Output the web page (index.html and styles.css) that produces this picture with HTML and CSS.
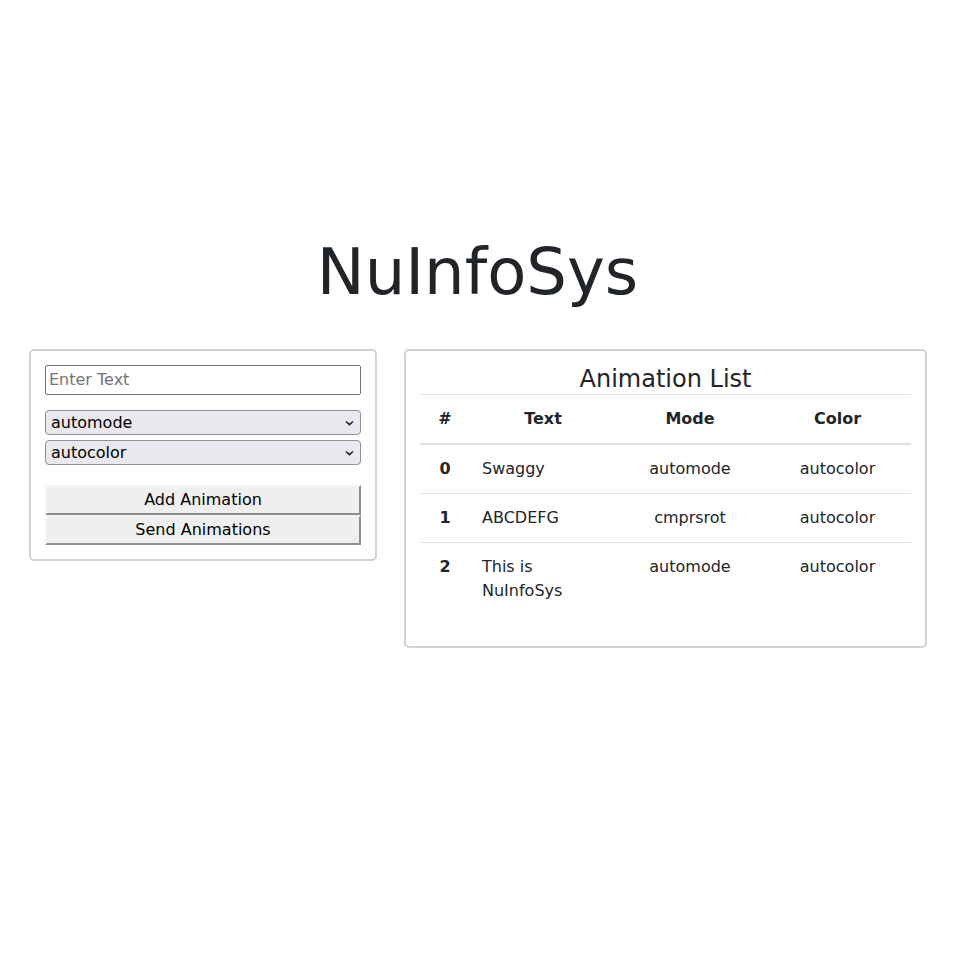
FILE: index.html
```html
<!DOCTYPE html>
<html lang="en">
<head>
    <meta charset="UTF-8">
    <meta name="viewport" content="width=device-width, initial-scale=1.0">
    <title>NuInfoSys</title>
    <link rel="stylesheet" href="styles.css">
</head>
<body>
    <h1 class="title">NuInfoSys</h1>
    <div class="panels">
        <div class="card form-card">
            <input type="text" class="text-input" placeholder="Enter Text">
            <div class="picker-wrap picker-first">
                <select class="picker">
                    <option>automode</option>
                    <option>cmprsrot</option>
                </select>
                <svg class="chevron" width="9" height="6" viewBox="0 0 9 6"><path d="M1 1.5l3.5 3.2 3.5-3.2" fill="none" stroke="#222" stroke-width="1.6"/></svg>
            </div>
            <div class="picker-wrap">
                <select class="picker">
                    <option>autocolor</option>
                </select>
                <svg class="chevron" width="9" height="6" viewBox="0 0 9 6"><path d="M1 1.5l3.5 3.2 3.5-3.2" fill="none" stroke="#222" stroke-width="1.6"/></svg>
            </div>
            <button class="action action-first">Add Animation</button>
            <button class="action">Send Animations</button>
        </div>
        <div class="card list-card">
            <h3 class="list-title">Animation List</h3>
            <table class="anim-table">
                <colgroup>
                    <col class="col-num">
                    <col class="col-text">
                    <col class="col-mode">
                    <col class="col-color">
                </colgroup>
                <thead>
                    <tr>
                        <th>#</th>
                        <th>Text</th>
                        <th>Mode</th>
                        <th>Color</th>
                    </tr>
                </thead>
                <tbody>
                    <tr>
                        <th>0</th>
                        <td class="cell-text">Swaggy</td>
                        <td>automode</td>
                        <td>autocolor</td>
                    </tr>
                    <tr>
                        <th>1</th>
                        <td class="cell-text">ABCDEFG</td>
                        <td>cmprsrot</td>
                        <td>autocolor</td>
                    </tr>
                    <tr>
                        <th>2</th>
                        <td class="cell-text">This is NuInfoSys</td>
                        <td>automode</td>
                        <td>autocolor</td>
                    </tr>
                </tbody>
            </table>
        </div>
    </div>
</body>
</html>
```

FILE: styles.css
```css
body {
    margin: 0;
    padding-top: 234px;
    font-family: "DejaVu Sans", sans-serif;
    font-size: 16px;
    line-height: 1.5;
    color: #212529;
    background: #fff;
}

.title {
    margin: 0 0 38px;
    padding-right: 5px;
    font-size: 64px;
    font-weight: 400;
    line-height: 1.2;
    text-align: center;
}

.panels {
    display: flex;
    align-items: flex-start;
    gap: 27px;
    padding-left: 29px;
}

.card {
    border: 2px solid #d3d3d3;
    border-radius: 5px;
    padding: 14px;
    box-sizing: border-box;
}

.form-card {
    width: 348px;
    display: flex;
    flex-direction: column;
}

.list-card {
    width: 523px;
}

.text-input {
    height: 30px;
    margin: 0 0 15px;
    padding: 1px 3px;
    box-sizing: border-box;
    font-family: inherit;
    font-size: 16px;
    border: 1px solid #767676;
    border-radius: 2px;
    color: #212529;
}

.text-input::placeholder {
    color: #757575;
}

.picker-wrap {
    position: relative;
    height: 25px;
}

.picker-first {
    margin-bottom: 5px;
}

.picker {
    appearance: none;
    width: 100%;
    height: 25px;
    margin: 0;
    padding: 0 20px 0 5px;
    box-sizing: border-box;
    font-family: inherit;
    font-size: 16px;
    line-height: 23px;
    color: #000;
    background: #e9e9ed;
    border: 1px solid #8f8f9d;
    border-radius: 4px;
}

.chevron {
    position: absolute;
    right: 7px;
    top: 10px;
    pointer-events: none;
}

.action {
    display: block;
    width: 100%;
    height: 30px;
    margin: 0;
    padding: 1px 6px;
    font-family: inherit;
    font-size: 16px;
    color: #000;
    background: #efefef;
    border: 2px solid;
    border-color: #f4f4f4 #8f8f8f #8f8f8f #f4f4f4;
}

.action-first {
    margin-top: 20px;
}

.list-title {
    margin: 0;
    padding-top: 1px;
    font-size: 24px;
    font-weight: 400;
    line-height: 27.8px;
    text-align: center;
}

.anim-table {
    width: 100%;
    margin-bottom: 17px;
    border-collapse: collapse;
    table-layout: fixed;
}

.col-num { width: 50px; }
.col-text { width: 146px; }
.col-mode { width: 148px; }
.col-color { width: 147px; }

.anim-table th,
.anim-table td {
    padding: 12px;
    border-top: 1px solid #dee2e6;
    text-align: center;
    vertical-align: top;
    font-weight: 400;
}

.anim-table th {
    font-weight: 700;
}

.anim-table thead th {
    border-bottom: 2px solid #dee2e6;
    vertical-align: bottom;
}

.anim-table .cell-text {
    text-align: left;
}
```
